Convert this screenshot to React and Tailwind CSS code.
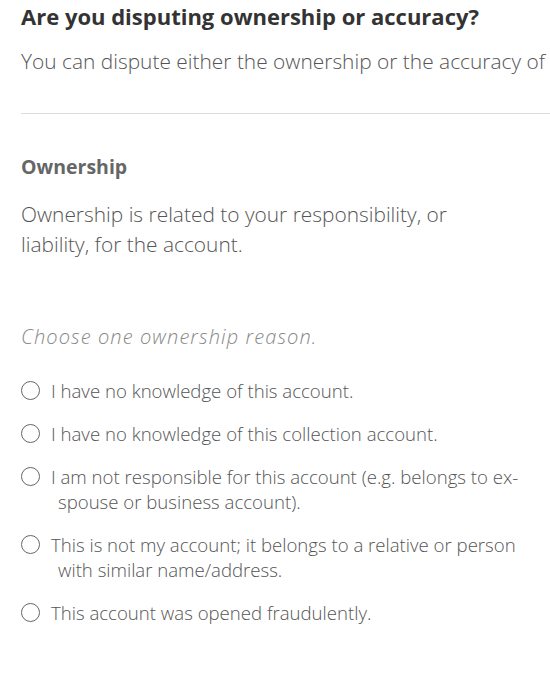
const reasons = [
    ['I have no knowledge of this account.'],
    ['I have no knowledge of this collection account.'],
    ['I am not responsible for this account (e.g. belongs to ex-', 'spouse or business account).'],
    ['This is not my account; it belongs to a relative or person', 'with similar name/address.'],
    ['This account was opened fraudulently.'],
]

const App = () => {
    return (
        <div className="w-[550px] h-[678px] overflow-hidden bg-white font-['Open_Sans',sans-serif]">
            <div className="pl-[21px]">
                <h1 className="text-[22px] leading-[32px] font-bold text-[#333333] whitespace-nowrap">
                    Are you disputing ownership or accuracy?
                </h1>
                <p className="mt-[14px] text-[20.9px] leading-[30px] font-[350] text-[#555555] whitespace-nowrap">
                    You can dispute either the ownership or the accuracy of
                </p>
            </div>

            <div className="ml-[21px] mt-[37px] border-t border-[#dddddd]" />

            <div className="pl-[21px]">
                <h2 className="mt-[38px] text-[19.5px] leading-[30px] font-bold text-[#666666]">Ownership</h2>
                <p className="mt-[17px] w-[470px] text-[20.9px] leading-[30px] font-[350] text-[#555555]">
                    Ownership is related to your responsibility, or liability, for the account.
                </p>
                <p className="mt-[63px] text-[20px] leading-[30px] font-light italic tracking-[1.1px] text-[#888888]">
                    Choose one ownership reason.
                </p>

                <div className="mt-[26px] flex flex-col gap-[18px]">
                    {reasons.map((lines, i) => (
                        <label key={i} className="flex items-start gap-[11px] cursor-pointer">
                            <span className="mt-[3px] w-[19px] h-[19px] rounded-full border-[1.5px] border-[#666666] shrink-0" />
                            <span className="text-[18.6px] leading-[25px] font-[350] text-[#555555] whitespace-nowrap">
                                {lines[0]}
                                {lines[1] && <span className="block pl-[7px]">{lines[1]}</span>}
                            </span>
                        </label>
                    ))}
                </div>
            </div>
        </div>
    )
}

export default App
